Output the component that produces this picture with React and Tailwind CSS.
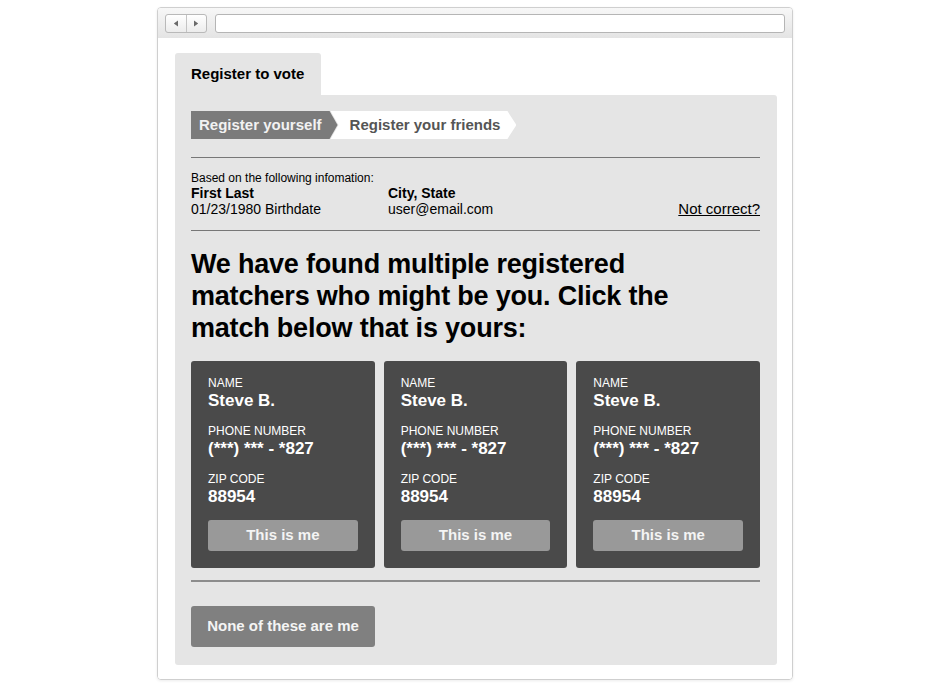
import React from "react";

const matches = [1, 2, 3].map(() => ({ name: "Steve B.", phone: "(***) *** - *827", zip: "88954" }));

const MatchCard = ({ name, phone, zip }) => (
  <div className="flex-1 bg-[#4a4a4a] rounded-[3px] px-[17px] pt-[15px] pb-[17px] text-white">
    <div className="text-[12px] leading-[14px]">NAME</div>
    <div className="text-[17px] font-bold leading-[22px]">{name}</div>
    <div className="text-[12px] leading-[14px] mt-[12px]">PHONE NUMBER</div>
    <div className="text-[17px] font-bold leading-[22px]">{phone}</div>
    <div className="text-[12px] leading-[14px] mt-[12px]">ZIP CODE</div>
    <div className="text-[17px] font-bold leading-[22px]">{zip}</div>
    <button className="mt-[12px] w-full h-[31px] bg-[#999999] rounded-[3px] text-[15px] font-bold text-[#f4f4f4]">
      This is me
    </button>
  </div>
);

export default function App() {
  return (
    <div className="w-[950px] h-[687px] bg-white pt-[7px] font-['Liberation_Sans',Arial,sans-serif]">
      <div className="mx-auto w-[636px] h-[673px] border border-[#cfcfcf] rounded-[4px] shadow-[0_1px_3px_rgba(0,0,0,0.08)] overflow-hidden flex flex-col">
        {/* toolbar */}
        <div className="h-[30px] bg-gradient-to-b from-[#f7f7f7] to-[#e4e4e4] flex items-center gap-[8px] px-[7px]">
          <div className="flex h-[19px] w-[42px] border border-[#b9b9b9] rounded-[3px] bg-gradient-to-b from-white to-[#ececec]">
            <div className="flex-1 flex items-center justify-center border-r border-[#c4c4c4]">
              <svg width="6" height="7" viewBox="0 0 6 7"><path d="M5 0.5 L0.8 3.5 L5 6.5 Z" fill="#6a6a6a" /></svg>
            </div>
            <div className="flex-1 flex items-center justify-center">
              <svg width="6" height="7" viewBox="0 0 6 7"><path d="M1 0.5 L5.2 3.5 L1 6.5 Z" fill="#6a6a6a" /></svg>
            </div>
          </div>
          <div className="h-[19px] w-[570px] border border-[#b5b5b5] rounded-[3px] bg-white" />
        </div>

        {/* page */}
        <div className="flex-1 bg-white pl-[17px] pr-[15px] pt-[15px]">
          <div className="w-[146px] h-[42px] bg-[#e5e5e5] rounded-t-[3px] px-[16px] flex items-center text-[15px] font-bold text-black">
            Register to vote
          </div>
          <div className="bg-[#e5e5e5] h-[570px] pl-[16px] pr-[17px] pt-[16px] rounded-b-[3px] rounded-tr-[3px]">
            {/* steps */}
            <div className="flex h-[28px] text-[15px] font-bold">
              <div className="bg-[#7b7b7b] text-[#f2f2f2] pl-[8px] pr-[16px] flex items-center [clip-path:polygon(0_0,calc(100%-8px)_0,100%_50%,calc(100%-8px)_100%,0_100%)]">
                Register yourself
              </div>
              <div className="bg-white text-[#555555] -ml-[7px] pl-[19px] pr-[16px] flex items-center [clip-path:polygon(0_0,calc(100%-9px)_0,100%_50%,calc(100%-9px)_100%,0_100%,8px_50%)]">
                Register your friends
              </div>
            </div>

            <div className="mt-[18px] border-t-[1.5px] border-[#777777]" />

            {/* info */}
            <div className="pt-[13px] pb-[13px] text-black">
              <div className="text-[12px] leading-[14px]">Based on the following infomation:</div>
              <div className="flex items-end">
                <div className="w-[197px] text-[14px] leading-[16px]">
                  <div className="font-bold">First Last</div>
                  <div>01/23/1980 Birthdate</div>
                </div>
                <div className="flex-1 text-[14px] leading-[16px]">
                  <div className="font-bold">City, State</div>
                  <div>user@email.com</div>
                </div>
                <a className="text-[15px] leading-[16px] underline text-black">Not correct?</a>
              </div>
            </div>

            <div className="border-t-[1.5px] border-[#777777]" />

            <h1 className="mt-[17px] text-[27px] leading-[32px] tracking-[-0.2px] font-bold text-black w-[500px]">
              We have found multiple registered matchers who might be you. Click the match below that is yours:
            </h1>

            <div className="mt-[17px] flex gap-[9px]">
              {matches.map((m, i) => (
                <MatchCard key={i} {...m} />
              ))}
            </div>

            <div className="mt-[12px] border-t-2 border-[#8c8c8c]" />

            <button className="mt-[24px] w-[184px] h-[41px] bg-[#808080] rounded-[3px] text-[15px] font-bold text-[#f4f4f4]">
              None of these are me
            </button>
          </div>
        </div>
      </div>
    </div>
  );
}
